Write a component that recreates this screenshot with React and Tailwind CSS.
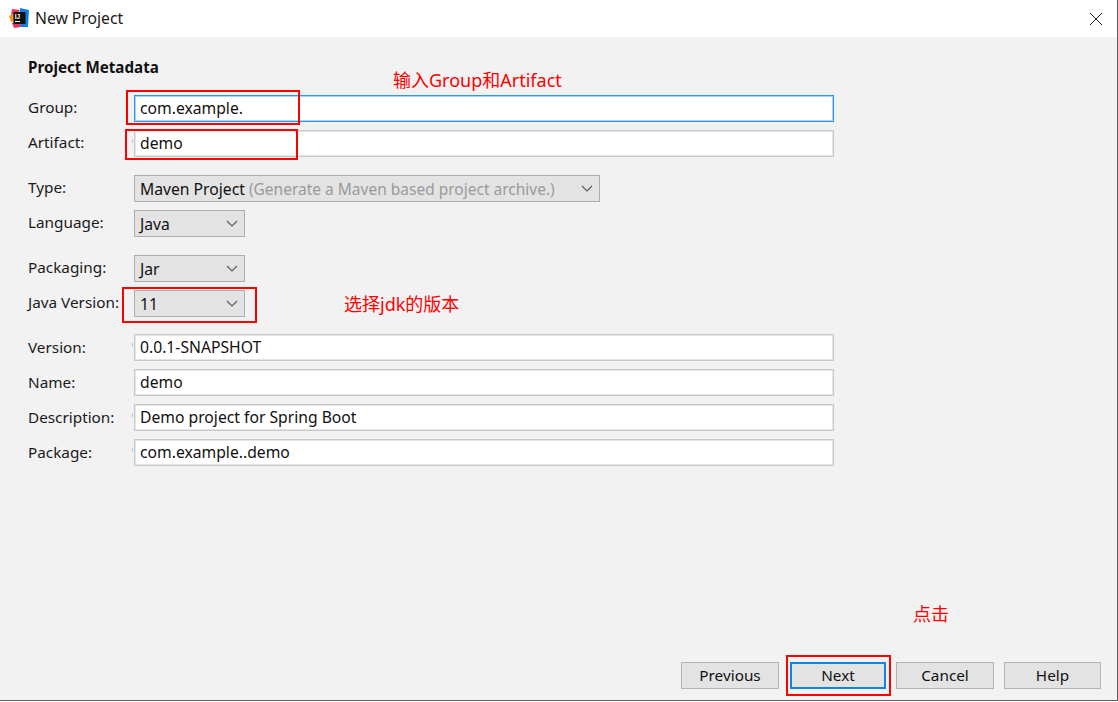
const fontStack = { fontFamily: '"Noto Sans", "Noto Sans CJK SC", sans-serif' };

function Field({ label, value, focused, mark, labelClass }) {
  return (
    <div className="flex items-center h-[27px]">
      <span className={"w-[106px] shrink-0 text-[15.3px] text-[#1a1a1a] " + labelClass}>{label}</span>
      <div
        className={
          focused
            ? "relative w-[700px] h-[27px] bg-white border border-[#2f96ef] shadow-[inset_0_0_0_1px_#a9d4f7] flex items-center pl-[5px] pr-2 pb-[2px] text-[#111111] text-[15.7px]"
            : "relative w-[700px] h-[27px] bg-white border border-[#c8c8c8] shadow-[inset_0_0_0_1px_#e6e6e6] flex items-center pl-[5px] pr-2 pb-[2px] text-[#111111] text-[15.7px]"
        }
      >
        {mark ? <i className="absolute -left-[3px] top-[8px] w-px h-[4px] bg-[#b4c6ea]" /> : null}
        <span className="whitespace-nowrap">{value}</span>
      </div>
    </div>
  );
}

function Chevron() {
  return (
    <svg width="12" height="7" viewBox="0 0 12 7" className="shrink-0" fill="none">
      <path d="M1 1l5 5 5-5" stroke="#5a5a5a" strokeWidth="1.1" />
    </svg>
  );
}

function Select({ label, value, hint, width }) {
  return (
    <div className="flex items-center h-[27px]">
      <span className="w-[106px] shrink-0 -mt-[4px] text-[15.3px] text-[#1a1a1a] whitespace-nowrap">{label}</span>
      <div
        className={
          "h-[27px] bg-[#e3e3e3] border border-[#adadad] flex items-center justify-between pl-[5px] pr-[6px] text-[#111111] text-[15.7px] " +
          width
        }
      >
        <span className="whitespace-nowrap">
          {value}
          {hint ? <span className="text-[#9a9a9a] text-[15.5px]"> {hint}</span> : null}
        </span>
        <Chevron />
      </div>
    </div>
  );
}

function Btn({ children, primary, width }) {
  return (
    <button
      className={
        primary
          ? "h-[27px] bg-[#e3e3e3] border-2 border-[#0f86dc] text-[#111111] flex items-center justify-center pb-[2px] " + width
          : "h-[27px] bg-[#e3e3e3] border border-[#b4b4b4] text-[#111111] flex items-center justify-center pb-[2px] " + width
      }
    >
      {children}
    </button>
  );
}

function Logo() {
  return (
    <svg width="20" height="20" viewBox="0 0 20 20" className="shrink-0 -mt-[2px]">
      <path d="M3 1l8 1-6 9-3-3z" fill="#f0315f" />
      <path d="M0 8l4-2 2 7-4 1z" fill="#f7941e" />
      <path d="M11 0l9 2-1 17-8 0z" fill="#0f80e8" />
      <path d="M3 15l6-3 3 7-7 1z" fill="#f0315f" />
      <rect x="4.5" y="4" width="12" height="12" fill="#111111" />
      <text x="5.8" y="10.5" fontSize="6.5" fontWeight="700" fill="#ffffff" fontFamily="Liberation Sans, sans-serif">IJ</text>
      <rect x="6" y="13" width="5" height="1" fill="#ffffff" />
    </svg>
  );
}

export default function App() {
  return (
    <div className="relative w-[1118px] h-[702px] bg-white overflow-hidden text-[15px] leading-5" style={fontStack}>
      <div className="w-full h-[701px] border-r border-b border-[#5f5f5f] flex flex-col bg-[#f2f2f2]">
        <header className="h-[37px] shrink-0 bg-white flex items-center pl-[9px] pr-[14px]">
          <Logo />
          <span className="ml-[6px] pb-[2px] text-[15.7px] text-[#1a1a1a]">New Project</span>
          <svg width="14" height="14" viewBox="0 0 14 14" className="ml-auto" fill="none">
            <path d="M1 1l12 12M13 1L1 13" stroke="#222222" strokeWidth="1" />
          </svg>
        </header>

        <main className="flex-1 flex flex-col pl-[28px] pt-[20px]">
          <h2 className="font-bold text-[#111111] h-[38px] text-[15.2px]">Project Metadata</h2>
          <div className="flex flex-col gap-2">
            <Field label="Group:" value="com.example." focused labelClass="-mt-[3px]" />
            <Field label="Artifact:" value="demo" mark labelClass="-mt-[3px]" />
          </div>
          <div className="flex flex-col gap-2 mt-[18px]">
            <Select label="Type:" value="Maven Project" hint="(Generate a Maven based project archive.)" width="w-[466px]" />
            <Select label="Language:" value="Java" width="w-[111px]" />
          </div>
          <div className="flex flex-col gap-2 mt-[18px]">
            <Select label="Packaging:" value="Jar" width="w-[111px]" />
            <Select label="Java Version:" value="11" width="w-[111px]" />
          </div>
          <div className="flex flex-col gap-2 mt-[17px]">
            <Field label="Version:" value="0.0.1-SNAPSHOT" mark labelClass="-mt-[1px]" />
            <Field label="Name:" value="demo" labelClass="-mt-[1px]" />
            <Field label="Description:" value="Demo project for Spring Boot" mark labelClass="-mt-[1px]" />
            <Field label="Package:" value="com.example..demo" mark labelClass="-mt-[1px]" />
          </div>
        </main>

        <footer className="shrink-0 flex justify-end gap-[10px] pr-[16px] pb-[11px] text-[15.3px]">
          <div className="mr-[1px]"><Btn width="w-[98px]">Previous</Btn></div>
          <Btn primary width="w-[96px]">Next</Btn>
          <Btn width="w-[98px]">Cancel</Btn>
          <Btn width="w-[97px]">Help</Btn>
        </footer>
      </div>

      <div className="absolute left-[126px] top-[90px] w-[174px] h-[35px] border-2 border-[#ff0000]" />
      <div className="absolute left-[125px] top-[129px] w-[173px] h-[31px] border-2 border-[#ff0000]" />
      <div className="absolute left-[122px] top-[287px] w-[135px] h-[36px] border-2 border-[#ff0000]" />
      <div className="absolute left-[786px] top-[655px] w-[105px] h-[41px] border-2 border-[#ff0000]" />

      <span className="absolute left-[393px] top-[68px] text-[18px] leading-6 text-[#ff0000] whitespace-nowrap">输入Group和Artifact</span>
      <span className="absolute left-[344px] top-[292px] text-[18px] leading-6 text-[#ff0000] whitespace-nowrap">选择jdk的版本</span>
      <span className="absolute left-[913px] top-[602px] text-[18px] leading-6 text-[#ff0000] whitespace-nowrap">点击</span>
    </div>
  );
}
